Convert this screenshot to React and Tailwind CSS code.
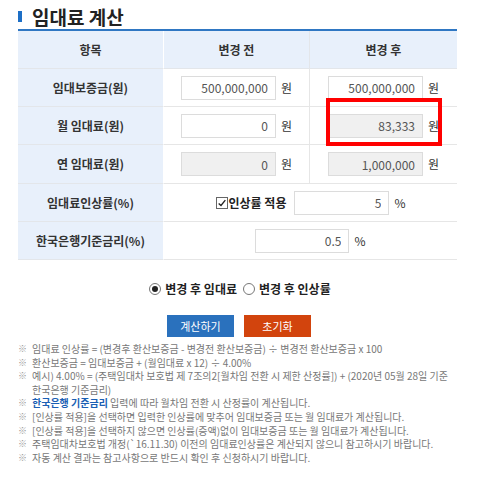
import React, { useState } from "react";

const font = { fontFamily: '"Malgun Gothic", "Noto Sans CJK KR", sans-serif' };

function Field({ value, gray, unit, w = "w-[95px]" }) {
  return (
    <div className="flex items-center gap-[5px]">
      <input
        readOnly
        value={value}
        className={`${w} h-[24px] border border-[#dcdcdc] px-[7px] text-right text-[12px] text-[#555] outline-none ${
          gray ? "bg-[#f0f0f0]" : "bg-white"
        }`}
      />
      <span className="text-[12px] text-[#333]">{unit}</span>
    </div>
  );
}

const notes = [
  "임대료 인상률 = (변경후 환산보증금 - 변경전 환산보증금) ÷ 변경전 환산보증금 x 100",
  "환산보증금 = 임대보증금 + (월임대료 x 12) ÷ 4.00%",
  "예시) 4.00% = (주택임대차 보호법 제 7조의2[월차임 전환 시 제한 산정률]) + (2020년 05월 28일 기준 한국은행 기준금리)",
  null,
  "[인상률 적용]을 선택하면 입력한 인상률에 맞추어 임대보증금 또는 월 임대료가 계산됩니다.",
  "[인상률 적용]을 선택하지 않으면 인상률(증액)없이 임대보증금 또는 월 임대료가 계산됩니다.",
  "주택임대차보호법 개정(`16.11.30) 이전의 임대료인상률은 계산되지 않으니 참고하시기 바랍니다.",
  "자동 계산 결과는 참고사항으로 반드시 확인 후 신청하시기 바랍니다.",
];

export default function App() {
  const [mode, setMode] = useState("rent");
  const label = "bg-[#e8f0fb] flex items-center justify-center font-bold text-[12px] text-[#333] border-b border-[#e3e6ea] border-r border-r-white";
  const cell = "flex items-center justify-center border-b border-[#e6e6e6]";

  return (
    <div className="w-[480px] h-[480px] bg-white" style={font}>
      <div className="flex items-center pl-[18px] pt-[3px] h-[29px]">
        <span className="w-[4px] h-[11px] bg-[#1d6fc6] mr-[10px]" />
        <h1 className="text-[19px] font-bold text-[#222] leading-none">임대료 계산</h1>
      </div>

      <div className="ml-[18px] w-[439px] border-t-2 border-[#2f77c3] grid grid-cols-[146px_146px_147px]">
        <div className={`${label} h-[38px]`}>항목</div>
        <div className="bg-[#e8f0fb] h-[38px] flex items-center justify-center font-bold text-[12px] text-[#333] border-b border-[#e3e6ea] border-r border-r-[#e3e6ea]">변경 전</div>
        <div className="bg-[#e8f0fb] h-[38px] flex items-center justify-center font-bold text-[12px] text-[#333] border-b border-[#e3e6ea]">변경 후</div>

        <div className={`${label} h-[38px]`}>임대보증금(원)</div>
        <div className={`${cell} h-[38px] border-r border-r-[#e6e6e6]`}>
          <Field value="500,000,000" unit="원" />
        </div>
        <div className={`${cell} h-[38px]`}>
          <Field value="500,000,000" unit="원" />
        </div>

        <div className={`${label} h-[38px]`}>월 임대료(원)</div>
        <div className={`${cell} h-[38px] border-r border-r-[#e6e6e6]`}>
          <Field value="0" unit="원" />
        </div>
        <div className={`${cell} h-[38px] relative`}>
          <Field value="83,333" unit="원" gray />
          <div className="absolute left-[16px] top-[-9px] w-[116px] h-[48px] border-4 border-[#ff0000]" />
        </div>

        <div className={`${label} h-[39px]`}>연 임대료(원)</div>
        <div className={`${cell} h-[39px] border-r border-r-[#e6e6e6]`}>
          <Field value="0" unit="원" gray />
        </div>
        <div className={`${cell} h-[39px]`}>
          <Field value="1,000,000" unit="원" gray />
        </div>

        <div className={`${label} h-[38px]`}>임대료인상률(%)</div>
        <div className={`${cell} h-[38px] col-span-2 gap-[8px]`}>
          <label className="flex items-center text-[12px] font-bold text-[#222]">
            <span className="w-[12px] h-[12px] border border-[#666] bg-white flex items-center justify-center mr-[1px]">
              <svg viewBox="0 0 12 12" className="w-[10px] h-[10px]">
                <path d="M2 6.5 L4.8 9 L10 2.5" fill="none" stroke="#222" strokeWidth="1.6" />
              </svg>
            </span>
            인상률 적용
          </label>
          <Field value="5" unit="%" />
        </div>

        <div className={`${label} h-[38px]`}>한국은행기준금리(%)</div>
        <div className={`${cell} h-[38px] col-span-2`}>
          <Field value="0.5" unit="%" w="w-[94px]" />
        </div>
      </div>

      <div className="flex justify-center items-center gap-[6px] mt-[20px] text-[12px] font-bold text-[#222]">
        <button className="flex items-center gap-[4px]" onClick={() => setMode("rent")}>
          <span className="w-[12px] h-[12px] rounded-full border border-[#777] flex items-center justify-center bg-white">
            {mode === "rent" && <span className="w-[6px] h-[6px] rounded-full bg-[#222]" />}
          </span>
          변경 후 임대료
        </button>
        <button className="flex items-center gap-[4px]" onClick={() => setMode("rate")}>
          <span className="w-[12px] h-[12px] rounded-full border border-[#777] flex items-center justify-center bg-white">
            {mode === "rate" && <span className="w-[6px] h-[6px] rounded-full bg-[#222]" />}
          </span>
          변경 후 인상률
        </button>
      </div>

      <div className="flex justify-center gap-[10px] mt-[17px] pr-[2px]">
        <button className="w-[67px] h-[22px] bg-[#2a71bd] text-white text-[11px]">계산하기</button>
        <button className="w-[67px] h-[22px] bg-[#d2440d] text-white text-[11px]">초기화</button>
      </div>

      <ul className="mt-[5px] pl-[18px] pr-[20px] text-[10px] leading-[13.6px] text-[#777] break-keep">
        {notes.map((n, i) => (
          <li key={i} className="flex">
            <span className="w-[14px] shrink-0 text-[#999] text-[9px]">※</span>
            {n === null ? (
              <span>
                <b className="text-[#1a5fb4]">한국은행 기준금리</b> 입력에 따라 월차임 전환 시 산정률이 계산됩니다.
              </span>
            ) : (
              <span>{n}</span>
            )}
          </li>
        ))}
      </ul>
    </div>
  );
}
